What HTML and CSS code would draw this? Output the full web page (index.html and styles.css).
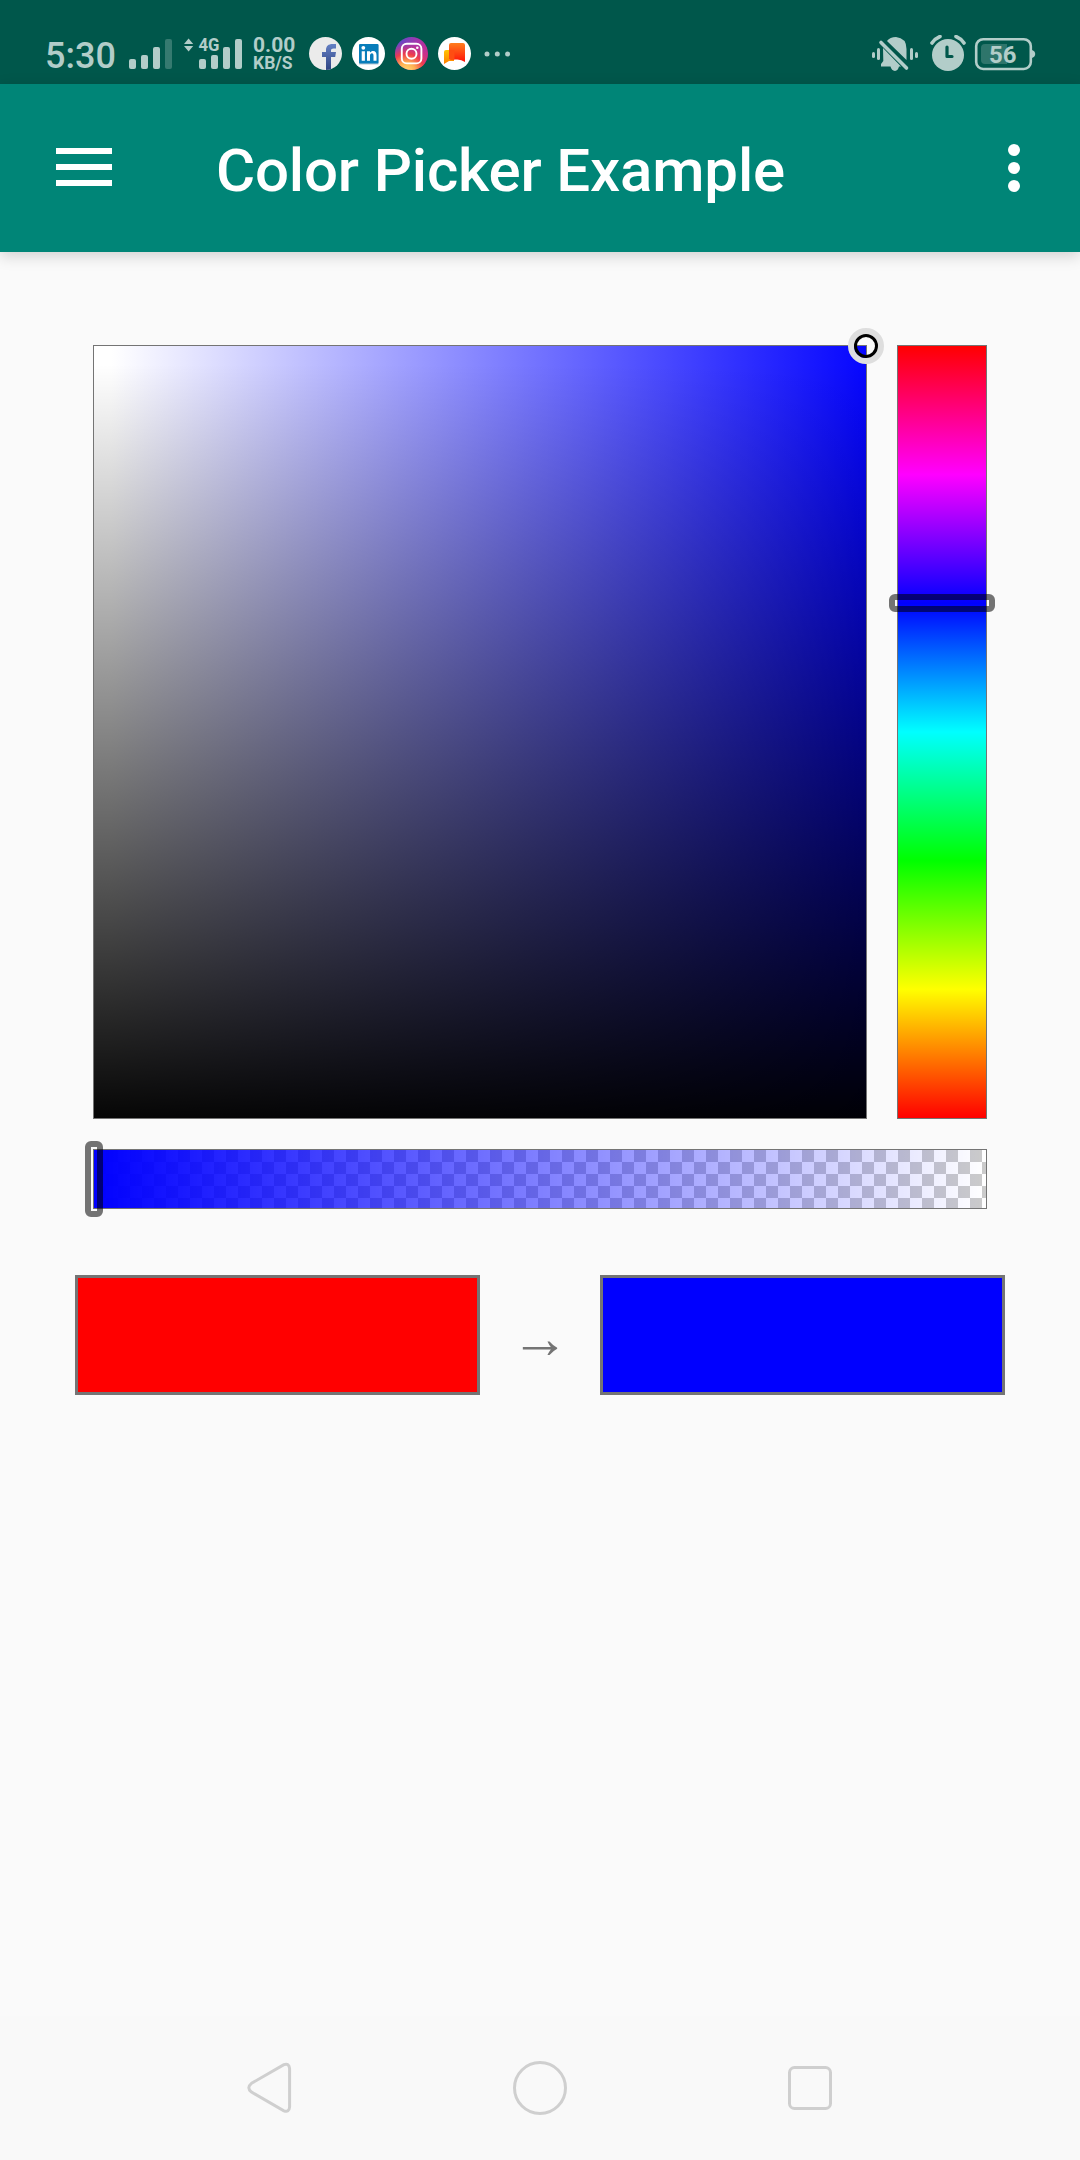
FILE: index.html
```html
<!DOCTYPE html>
<html lang="en">
<head>
<meta charset="utf-8">
<title>Color Picker Example</title>
<link rel="stylesheet" href="styles.css">
</head>
<body>
<div class="screen">
  <header class="status-bar">
    <div class="clock">5:30</div>
    <svg class="signals" width="114" height="40" viewBox="129 31 114 40" fill="#b2cdc9">
      <rect x="129" y="59" width="7" height="10" rx="2"/>
      <rect x="141" y="55" width="7" height="14" rx="2"/>
      <rect x="153" y="47" width="7" height="22" rx="2"/>
      <rect x="165" y="39" width="7" height="30" rx="2" fill="#357a70"/>
      <path d="M184 44l4.600-5.500 4.600 5.500zM184 46h9.200l-4.600 5.500z"/>
      <text class="net-type" x="198.500" y="51.200" textLength="21" lengthAdjust="spacingAndGlyphs">4G</text>
      <rect x="199" y="59" width="7" height="10" rx="2"/>
      <rect x="211" y="55" width="7" height="14" rx="2"/>
      <rect x="223" y="47" width="7" height="22" rx="2"/>
      <rect x="235" y="39" width="7" height="30" rx="2"/>
    </svg>
    <div class="speed"><span class="speed-value">0.00</span><span class="speed-unit">KB/S</span></div>
    <div class="notifications">
      <svg width="33" height="33" viewBox="0 0 33 33">
        <defs>
          <linearGradient id="fb" x1="0" y1="0" x2="0" y2="1"><stop offset="0" stop-color="#6580c4"/><stop offset="1" stop-color="#2f4583"/></linearGradient>
          <clipPath id="round"><circle cx="16.500" cy="16.500" r="16.500"/></clipPath>
        </defs>
        <circle cx="16.500" cy="16.500" r="16.500" fill="#ebebeb"/>
        <path clip-path="url(#round)" fill="url(#fb)" d="M17 33V20h-4v-5h4v-2c0-4 2.500-6 6.500-6H27v4.500h-2.500c-1.800 0-2.500.8-2.500 2.200V15h5l-.8 5H22v13z"/>
      </svg>
      <svg width="33" height="33" viewBox="0 0 33 33">
        <circle cx="16.500" cy="16.500" r="16.500" fill="#fff"/>
        <rect x="7" y="8" width="19.500" height="19.500" fill="#b8c9d3"/>
        <rect x="7" y="7" width="19.500" height="19.500" rx="1" fill="#087dba"/>
        <g fill="#fff"><circle cx="11.300" cy="10.800" r="1.900"/><path d="M9.700 14.200h3.200v9.500H9.700zM15 14.200h3v1.400c.8-1.100 1.800-1.700 3.100-1.700 2.500 0 3.400 1.700 3.400 4.300v5.500h-3v-5c0-1.500-.4-2.400-1.600-2.400s-1.900.9-1.900 2.400v5h-3z"/></g>
      </svg>
      <svg width="33" height="33" viewBox="0 0 33 33">
        <defs>
          <linearGradient id="igBase" x1="0" y1="0" x2="1" y2=".5"><stop offset="0" stop-color="#4d51cf"/><stop offset=".6" stop-color="#a536ac"/><stop offset="1" stop-color="#c62c8e"/></linearGradient>
          <radialGradient id="igGlow" cx=".35" cy="1.050" r=".9"><stop offset="0" stop-color="#ffe27a"/><stop offset=".3" stop-color="#ffb052"/><stop offset=".6" stop-color="#ee3c4c"/><stop offset="1" stop-color="#d02d90" stop-opacity="0"/></radialGradient>
        </defs>
        <circle cx="16.500" cy="16.500" r="16.500" fill="url(#igBase)"/>
        <circle cx="16.500" cy="16.500" r="16.500" fill="url(#igGlow)"/>
        <g fill="none" stroke="#fff" stroke-width="1.900"><rect x="6.800" y="6.800" width="19.600" height="19.600" rx="5"/><circle cx="16.500" cy="16.700" r="5"/></g>
        <circle cx="22.300" cy="10.800" r="1.300" fill="#fff"/>
      </svg>
      <svg width="33" height="33" viewBox="0 0 33 33">
        <defs>
          <linearGradient id="chatA" x1="0" y1="0" x2="0" y2="1"><stop offset="0" stop-color="#ff7d1d"/><stop offset="1" stop-color="#ff1208"/></linearGradient>
          <linearGradient id="chatB" x1="0" y1="0" x2="0" y2="1"><stop offset="0" stop-color="#ffc400"/><stop offset="1" stop-color="#ff7d00"/></linearGradient>
        </defs>
        <circle cx="16.500" cy="16.500" r="16.500" fill="#fff"/>
        <path fill="url(#chatB)" d="M8 13h8v11h-5l-5 3V15q0-2 2-2z"/>
        <path fill="url(#chatA)" d="M13 6h12q2 0 2 2v17q-4-3-9-2.500h-5q-2 0-2-2V8q0-2 2-2z"/>
        <path fill="#ff4d12" d="M11 13h5.500v9.500H13q-2 0-2-2z"/>
      </svg>
    </div>
    <svg class="more-notifications" width="28" height="6" viewBox="0 0 28 6" fill="#b2cdc9"><circle cx="3" cy="3" r="2.500"/><circle cx="13.300" cy="3" r="2.500"/><circle cx="23.600" cy="3" r="2.500"/></svg>
    <svg class="system" width="164" height="36" viewBox="872 35 164 36" fill="#b2cdc9">
      <rect x="872" y="52" width="3" height="6" rx="1.500"/><rect x="877" y="48" width="3" height="12" rx="1.500"/>
      <rect x="910" y="48" width="3" height="12" rx="1.500"/><rect x="915" y="52" width="3" height="6" rx="1.500"/>
      <path d="M887 41q3-4 9-4 10.500 1 10.500 12v11zM883 48l18 18.500h-2q-1 4-4 4.500-3.500-.5-4.500-4.500h-9.500v-2.500l2.300-3z"/>
      <path d="M881 42.500L906.500 68" fill="none" stroke="#b2cdc9" stroke-width="3.600" stroke-linecap="round"/>
      <path d="M884.500 41.500L908 65" fill="none" stroke="#00574b" stroke-width="1.800"/>
      <circle cx="948" cy="55" r="16"/>
      <path d="M932 43q3-4.500 8-6.500M964 43q-3-4.500-8-6.500" fill="none" stroke="#b2cdc9" stroke-width="3.600" stroke-linecap="round"/>
      <path d="M947 47v9.500h5" fill="none" stroke="#00574b" stroke-width="3.200" stroke-linecap="round" stroke-linejoin="round"/>
      <rect x="976.200" y="39.200" width="54.600" height="29.800" rx="7" fill="none" stroke="#b2cdc9" stroke-width="2.600"/>
      <path d="M1032 50q3.200 1.200 3.200 4t-3.200 4z"/>
      <path d="M985 44h22v20h-22q-4 0-4-4V48q0-4 4-4z" fill="#2e756b"/>
      <text class="battery-level" x="989" y="62.800" textLength="27.500" lengthAdjust="spacingAndGlyphs">56</text>
    </svg>
  </header>

  <div class="app-bar">
    <svg width="56" height="38" viewBox="0 0 56 38" fill="#fff"><path d="M0 0h56v6H0zM0 16h56v6H0zM0 32h56v6H0z"/></svg>
    <h1 class="title">Color Picker Example</h1>
    <svg class="overflow" width="12" height="48" viewBox="0 0 12 48" fill="#fff"><circle cx="6" cy="6" r="6"/><circle cx="6" cy="24" r="6"/><circle cx="6" cy="42" r="6"/></svg>
  </div>

  <main class="picker">
    <div class="spectrum">
      <div class="shade"><span class="target"></span></div>
      <div class="hue"><span class="hue-cursor"></span></div>
    </div>
    <div class="alpha"><span class="alpha-cursor"></span></div>
    <div class="compare">
      <div class="swatch swatch-old"></div>
      <div class="arrow">→</div>
      <div class="swatch swatch-new"></div>
    </div>
  </main>

  <nav class="nav-bar">
    <svg width="54" height="54" viewBox="0 0 54 54"><path d="M8.500 22.300L40.900 3.700q5.200-2 5.700 4v38.100q-.5 6-5.700 4L8.500 31.100q-5.400-4.400 0-8.800z"/></svg>
    <svg width="54" height="54" viewBox="0 0 54 54"><circle cx="27" cy="27" r="25.500"/></svg>
    <svg width="54" height="54" viewBox="0 0 54 54"><rect x="6.500" y="6.500" width="41" height="41" rx="5"/></svg>
  </nav>
</div>
</body>
</html>
```
FILE: styles.css
```css
* { box-sizing: border-box; }

body {
  margin: 0;
  background: #fafafa;
  font-family: Roboto, "Liberation Sans", sans-serif;
}

svg { display: block; flex: none; }

.screen {
  display: flex;
  flex-direction: column;
  width: 1080px;
  height: 2160px;
  overflow: hidden;
}

.status-bar {
  display: flex;
  align-items: flex-start;
  height: 84px;
  padding: 35px 44px 0 45px;
  background: #00574b;
  color: #b2cdc9;
}

.clock {
  width: 84px;
  font-size: 36px;
  font-weight: 500;
  line-height: 42px;
}

.signals { margin-top: -4px; }
.net-type { font-size: 17.500px; font-weight: 700; }

.speed {
  display: flex;
  flex-direction: column;
  width: 56px;
  margin-left: 10px;
  font-weight: 700;
}

.speed-value { font-size: 21px; line-height: 20px; }
.speed-unit { font-size: 17.500px; line-height: 16px; }

.notifications {
  display: flex;
  gap: 10px;
  margin-top: 2px;
}

.more-notifications { margin: 16px 0 0 13px; }
.system { margin-left: auto; }
.battery-level { font-size: 24px; font-weight: 700; }

.app-bar {
  display: flex;
  align-items: flex-start;
  position: relative;
  height: 168px;
  padding: 64px 60px 0 56px;
  background: #008577;
  box-shadow: 0 4px 14px rgba(0, 0, 0, 0.17);
}

.title {
  margin: -13px 0 0 104px;
  color: #fff;
  font-size: 60px;
  font-weight: 500;
  letter-spacing: -0.17px;
  line-height: 72px;
  white-space: nowrap;
}

.overflow { margin: -4px 0 0 auto; }

.picker {
  flex: 1;
  padding: 93px 75px 0;
}

.spectrum {
  display: flex;
  justify-content: space-between;
  height: 774px;
  margin: 0 18px 30px;
}

.shade, .hue, .alpha {
  position: relative;
  border: 1px solid #747474;
}

.shade {
  width: 774px;
  background:
    linear-gradient(to bottom, transparent 18px, #000 calc(100% + 18px)),
    linear-gradient(to right, #fff 18px, #00f calc(100% + 18px));
}

.hue {
  width: 90px;
  background: linear-gradient(#f00, #f0f, #00f, #0ff, #0f0, #ff0, #f00);
}

.alpha {
  height: 60px;
  margin: 0 18px 66px;
  background:
    linear-gradient(to right, #00f, rgba(0, 0, 255, 0)),
    repeating-conic-gradient(#cbcbcb 0 25%, #fff 0 50%) 0 0 / 24px 24px;
}

.target {
  position: absolute;
  top: -18px;
  right: -18px;
  width: 36px;
  height: 36px;
  border: 6px solid #dedede;
  border-radius: 50%;
}

.target::after {
  content: "";
  position: absolute;
  inset: 0;
  border: 3px solid #000;
  border-radius: 50%;
}

.hue-cursor, .alpha-cursor {
  position: absolute;
  border: 6px solid rgba(0, 0, 0, 0.54);
  border-radius: 6px;
}

.hue-cursor { top: 248px; left: -9px; width: 106px; height: 18px; }
.alpha-cursor { top: -9px; left: -9px; width: 18px; height: 76px; }

.compare {
  display: flex;
  justify-content: space-between;
  align-items: center;
}

.swatch {
  width: 405px;
  height: 120px;
  border: 3px solid #747474;
}

.swatch-old { background: #f00; }
.swatch-new { background: #00f; }

.arrow {
  margin-top: 6px;
  color: #747474;
  font-family: "Liberation Sans", sans-serif;
  font-size: 58px;
  line-height: 48px;
}

.nav-bar {
  display: flex;
  justify-content: space-between;
  height: 144px;
  padding: 45px 243px 0;
  background: #f9f9f9;
}

.nav-bar svg {
  fill: none;
  stroke: #cfcfcf;
  stroke-width: 3;
}
```
